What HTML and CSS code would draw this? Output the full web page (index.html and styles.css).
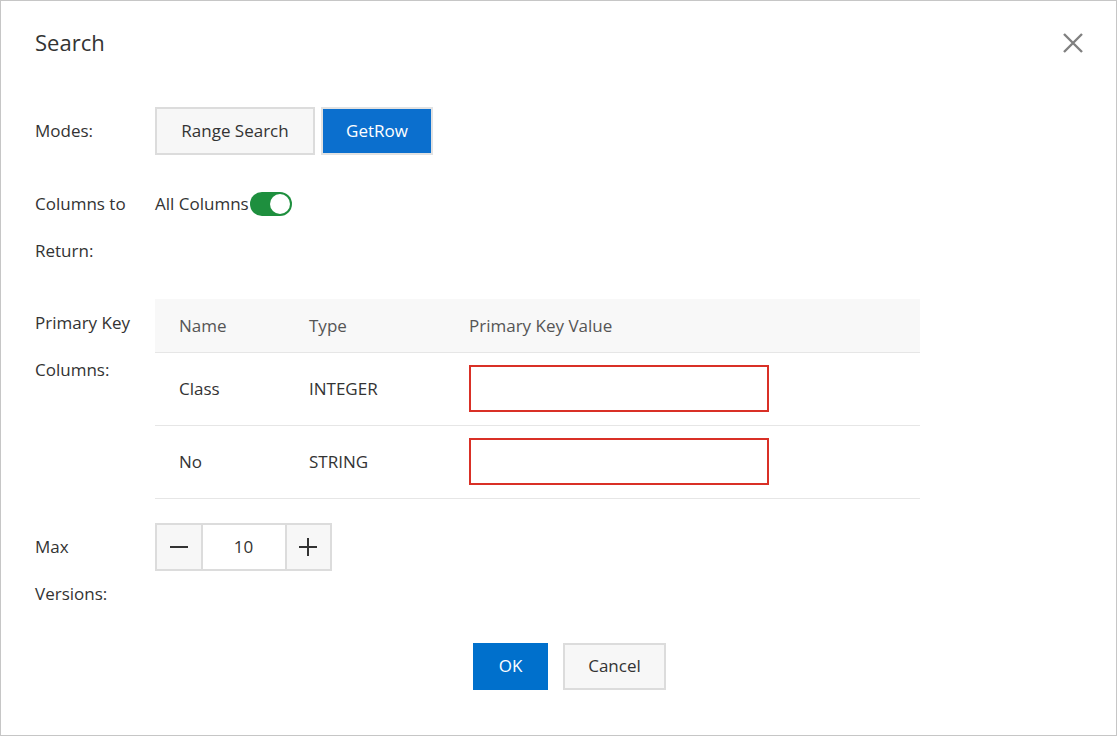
FILE: index.html
```html
<!DOCTYPE html>
<html>
<head>
<meta charset="utf-8">
<link rel="stylesheet" href="styles.css">
</head>
<body>
<div class="dialog">
  <div class="dialog-header">
    <div class="dialog-title">Search</div>
    <button class="close-btn" aria-label="Close">
      <svg width="20" height="20" viewBox="0 0 20 20"><path d="M1 1L19 19M19 1L1 19" stroke="#808080" stroke-width="2.4" fill="none"/></svg>
    </button>
  </div>
  <div class="dialog-body">
    <div class="form-row">
      <div class="form-label">Modes:</div>
      <div class="form-control">
        <div class="mode-group">
          <button class="btn btn-normal mode-range">Range Search</button>
          <button class="btn btn-primary mode-getrow">GetRow</button>
        </div>
      </div>
    </div>
    <div class="form-row">
      <div class="form-label">Columns to Return:</div>
      <div class="form-control switch-line">
        <span class="switch-text">All Columns</span>
        <span class="switch"><span class="switch-knob"></span></span>
      </div>
    </div>
    <div class="form-row">
      <div class="form-label">Primary Key Columns:</div>
      <div class="form-control">
        <table class="pk-table">
          <thead>
            <tr><th class="col-name">Name</th><th class="col-type">Type</th><th>Primary Key Value</th></tr>
          </thead>
          <tbody>
            <tr><td>Class</td><td>INTEGER</td><td><input class="pk-input" type="text"></td></tr>
            <tr><td>No</td><td>STRING</td><td><input class="pk-input" type="text"></td></tr>
          </tbody>
        </table>
      </div>
    </div>
    <div class="form-row">
      <div class="form-label">Max Versions:</div>
      <div class="form-control">
        <div class="number-picker">
          <button class="np-btn">
            <svg width="18" height="18" viewBox="0 0 18 18"><path d="M0 9H18" stroke="#333" stroke-width="2"/></svg>
          </button>
          <input class="np-input" type="text" value="10">
          <button class="np-btn">
            <svg width="18" height="18" viewBox="0 0 18 18"><path d="M0 9H18M9 0V18" stroke="#333" stroke-width="2"/></svg>
          </button>
        </div>
      </div>
    </div>
  </div>
  <div class="dialog-footer">
    <button class="btn btn-primary btn-ok">OK</button>
    <button class="btn btn-normal btn-cancel">Cancel</button>
  </div>
</div>
</body>
</html>
```

FILE: styles.css
```css
* { box-sizing: border-box; }
html, body { margin: 0; padding: 0; background: #fff; }
body {
  font-family: "Open Sans", "Noto Sans", Arial, sans-serif;
  font-size: 17px;
  color: #333;
}
.dialog {
  width: 1117px;
  height: 736px;
  border: 1px solid #c6c6c6;
  background: #fff;
  display: flex;
  flex-direction: column;
}
.dialog-header {
  display: flex;
  align-items: center;
  justify-content: space-between;
  height: 84px;
  padding: 0 33px 2px 34px;
}
.dialog-title {
  font-size: 22px;
  color: #333;
  line-height: 30px;
}
.close-btn {
  border: 0;
  background: transparent;
  padding: 0;
  width: 20px;
  height: 20px;
  display: flex;
  margin-top: 1px;
}
.dialog-body {
  padding: 22px 0 0 34px;
}
.form-row {
  display: flex;
  align-items: flex-start;
  margin-bottom: 25px;
}
.form-row:nth-child(3) { margin-bottom: 24px; }
.form-label {
  width: 120px;
  line-height: 47px;
  color: #333;
  padding-right: 16px;
}
.form-row:first-child .form-label { line-height: 47px; }
.form-control { flex: 1; }
.mode-group { display: flex; gap: 6px; }
.btn {
  font-family: inherit;
  font-size: 17px;
  height: 48px;
  border: 2px solid #dcdcdc;
  padding: 0 0 1px;
  cursor: pointer;
}
.btn-normal { background: #f7f7f7; color: #333; }
.btn-primary { background: #0070cc; color: #fff; }
.mode-range { width: 160px; }
.mode-getrow { width: 112px; background: #0b6fce; border-color: #e2e2e2; }
.switch-line {
  display: flex;
  align-items: center;
  height: 47px;
}
.switch {
  width: 42px;
  height: 24px;
  border-radius: 12px;
  background: #1e8f3e;
  position: relative;
  display: inline-block;
  margin-left: 1px;
}
.switch-knob {
  position: absolute;
  top: 2px;
  right: 2px;
  width: 20px;
  height: 20px;
  border-radius: 50%;
  background: #fff;
}
.pk-table {
  width: 765px;
  border-collapse: collapse;
}
.pk-table th {
  background: #f8f8f8;
  font-weight: normal;
  text-align: left;
  color: #555;
  height: 53px;
  padding: 0 0 0 24px;
  border-bottom: 1px solid #e6e6e6;
}
.pk-table td {
  height: 73px;
  padding: 0 0 0 24px;
  border-bottom: 1px solid #e6e6e6;
  color: #333;
}
.col-name { width: 130px; }
.col-type { width: 160px; }
.pk-input {
  display: block;
  width: 300px;
  height: 47px;
  border: 2px solid #d93026;
  outline: none;
  font-family: inherit;
  font-size: 17px;
  padding: 0 10px;
}
.number-picker {
  display: flex;
  width: 177px;
  height: 48px;
}
.np-btn {
  width: 48px;
  height: 48px;
  border: 2px solid #dcdcdc;
  background: #f7f7f7;
  display: flex;
  align-items: center;
  justify-content: center;
  padding: 0;
}
.np-input {
  width: 82px;
  height: 48px;
  border: 2px solid #dcdcdc;
  border-left: 0;
  border-right: 0;
  text-align: center;
  font-family: inherit;
  font-size: 17px;
  color: #333;
  outline: none;
  padding: 0 0 1px;
}
.dialog-footer {
  display: flex;
  justify-content: center;
  gap: 15px;
  padding-left: 22px;
  margin-top: 1px;
}
.btn-ok { width: 75px; height: 47px; border: 0; }
.btn-cancel { width: 103px; height: 47px; }
```
